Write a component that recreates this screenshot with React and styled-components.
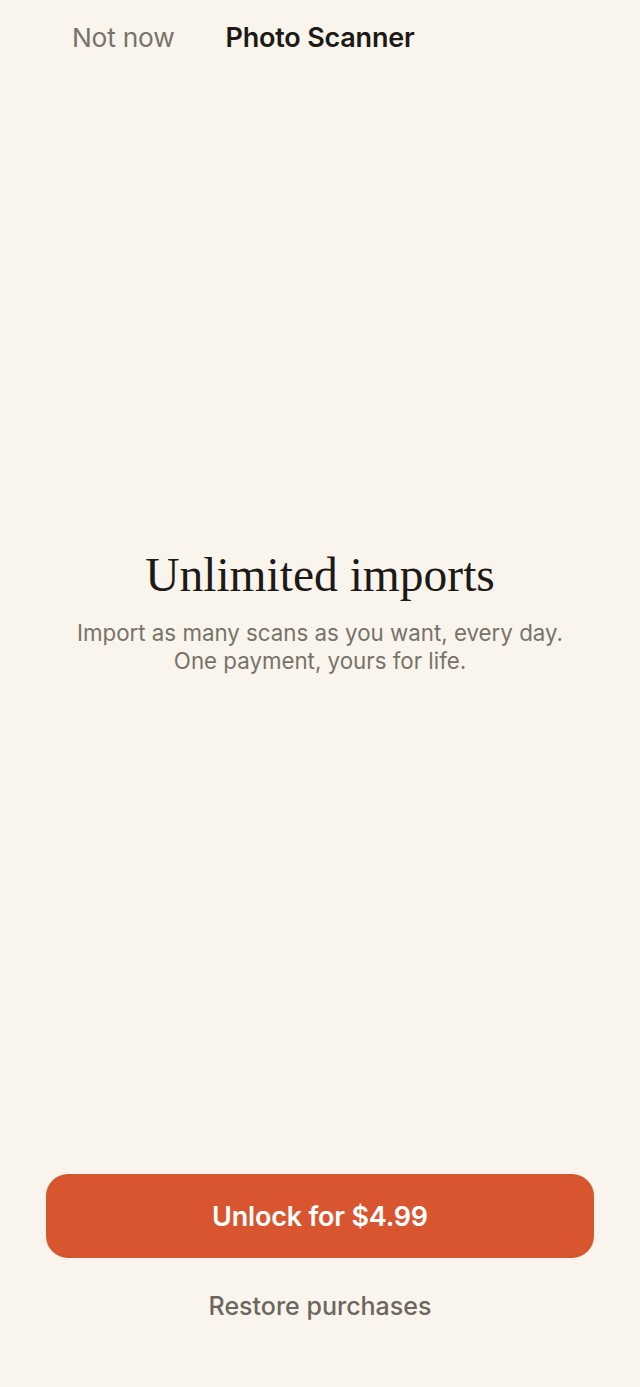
import React from "react";
import styled, { createGlobalStyle } from "styled-components";

const GlobalStyle = createGlobalStyle`
  html, body {
    margin: 0;
    padding: 0;
    background: #f9f5ec;
  }
  body {
    font-family: Inter, "Liberation Sans", sans-serif;
    -webkit-font-smoothing: antialiased;
  }
`;

const Screen = styled.div`
  display: flex;
  flex-direction: column;
  min-height: 1387px;
  background: #f9f5ec;
`;

const Header = styled.header`
  display: grid;
  grid-template-columns: 1fr auto 1fr;
  align-items: center;
  height: 74px;
`;

const NotNow = styled.button`
  justify-self: start;
  margin-left: 72px;
  padding: 0;
  border: none;
  background: none;
  font-family: inherit;
  font-size: 26.3px;
  color: #77736a;
  letter-spacing: -0.2px;
`;

const Title = styled.h1`
  margin: 0;
  font-size: 27px;
  font-weight: 600;
  color: #1c1a16;
  letter-spacing: -0.2px;
`;

const Body = styled.main`
  flex: 1;
  display: flex;
  flex-direction: column;
  align-items: center;
  justify-content: center;
  text-align: center;
  padding-bottom: 26px;
`;

const Headline = styled.h2`
  margin: 0 0 15px;
  font-family: "Liberation Serif", "DejaVu Serif", serif;
  font-size: 47.5px;
  font-weight: 400;
  color: #1c1a16;
  line-height: 1.2;
`;

const Subtitle = styled.p`
  margin: 0;
  font-size: 22.3px;
  line-height: 28px;
  color: #77736a;
`;

const Footer = styled.footer`
  display: flex;
  flex-direction: column;
  align-items: center;
  padding: 0 46px 66px;
`;

const UnlockButton = styled.button`
  width: 100%;
  height: 84px;
  border: none;
  border-radius: 22px;
  background: #d9552f;
  color: #ffffff;
  font-family: inherit;
  font-size: 27px;
  font-weight: 600;
  letter-spacing: -0.2px;
`;

const Restore = styled.button`
  margin-top: 33px;
  padding: 0;
  border: none;
  background: none;
  font-family: inherit;
  font-size: 25px;
  font-weight: 500;
  color: #6b675e;
`;

export default function App() {
  return (
    <>
      <GlobalStyle />
      <Screen>
        <Header>
          <NotNow>Not now</NotNow>
          <Title>Photo Scanner</Title>
          <span />
        </Header>
        <Body>
          <Headline>Unlimited imports</Headline>
          <Subtitle>
            Import as many scans as you want, every day.
            <br />
            One payment, yours for life.
          </Subtitle>
        </Body>
        <Footer>
          <UnlockButton>Unlock for $4.99</UnlockButton>
          <Restore>Restore purchases</Restore>
        </Footer>
      </Screen>
    </>
  );
}
